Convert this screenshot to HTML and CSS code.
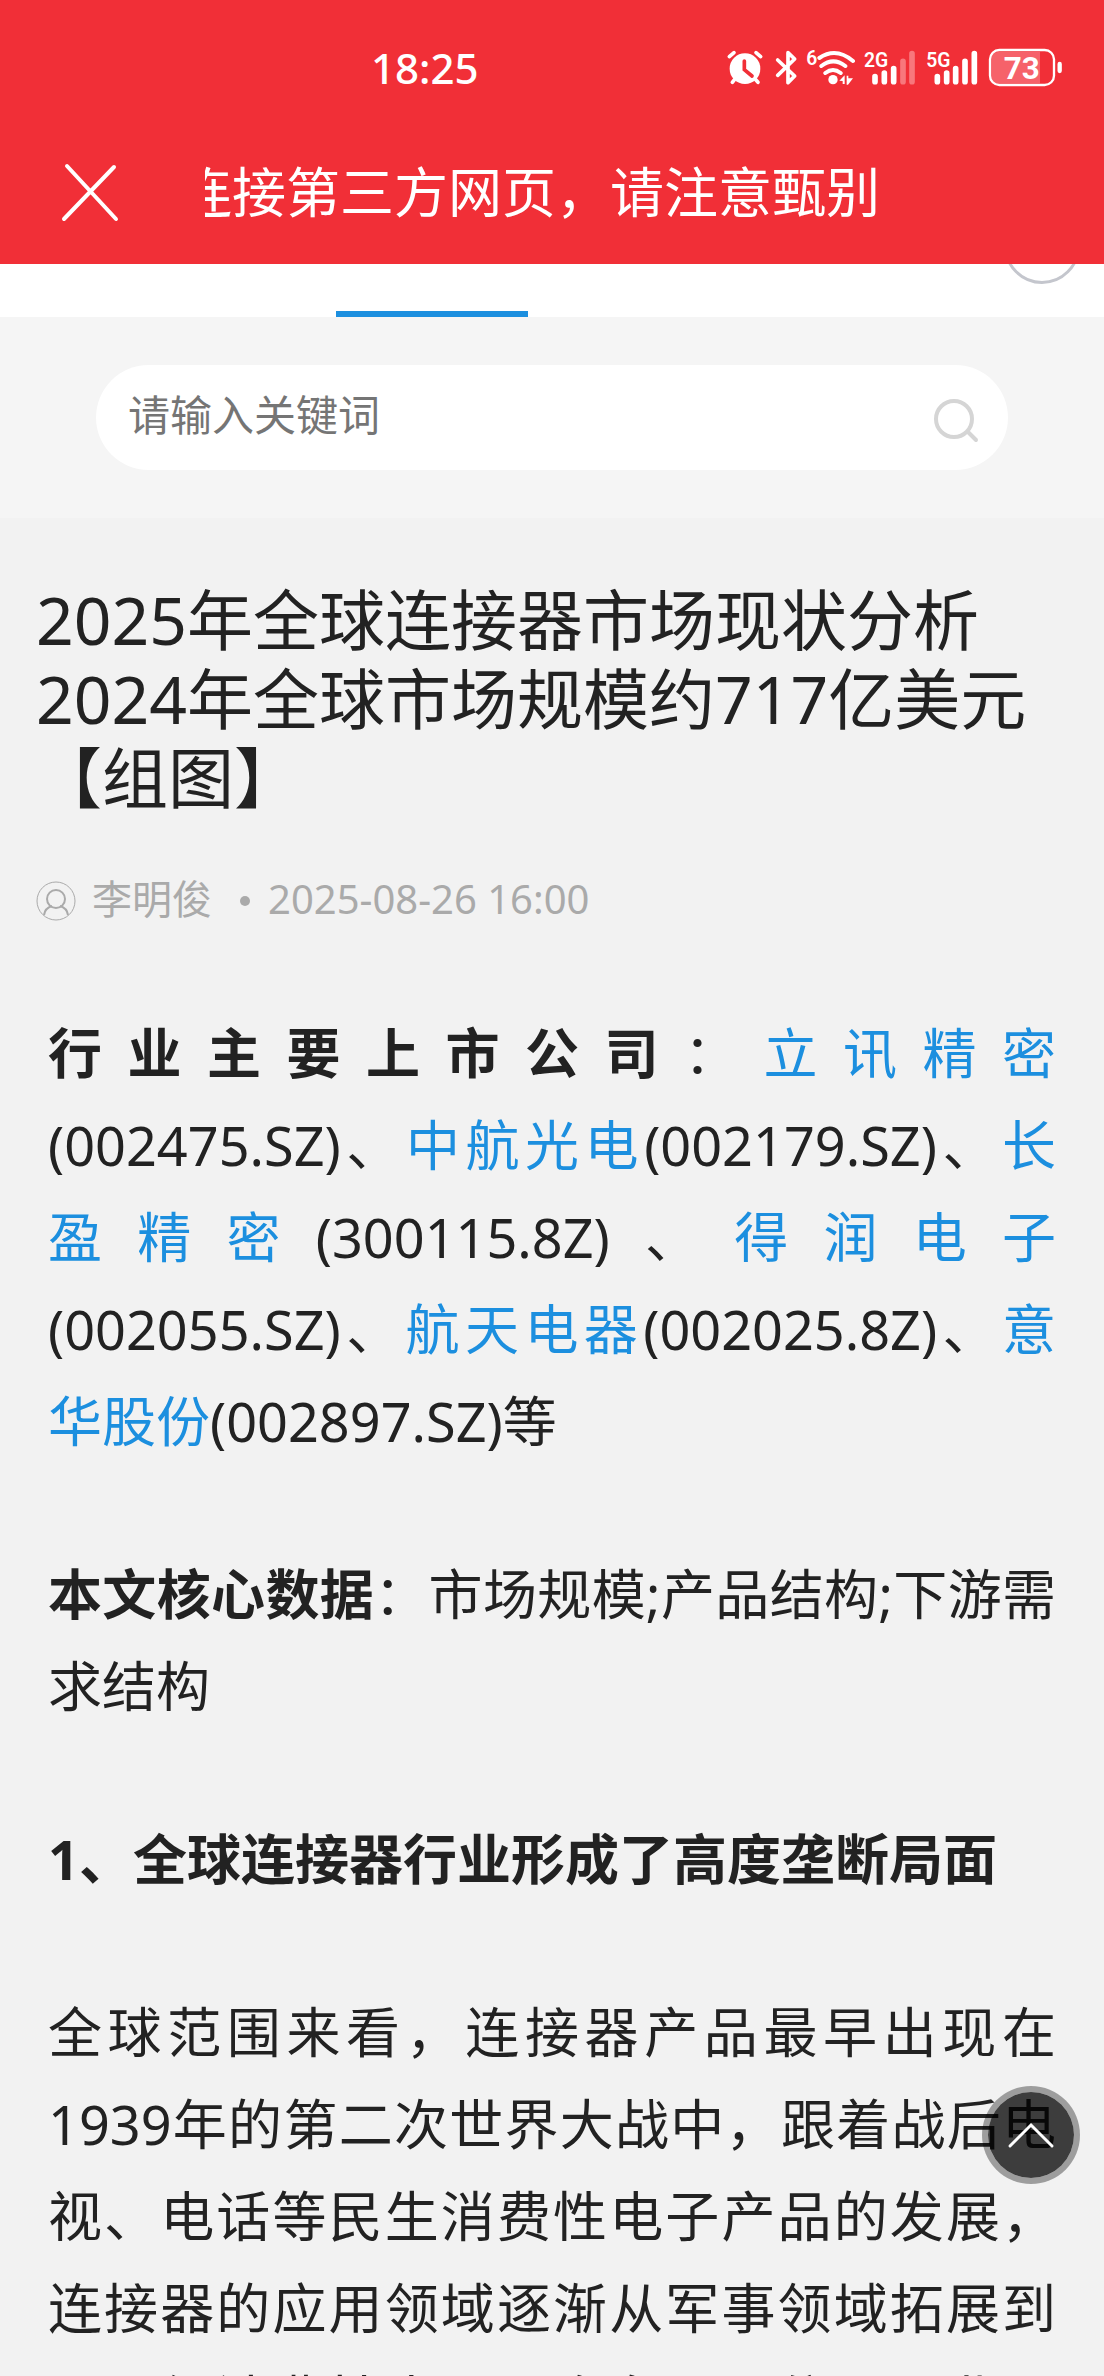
FILE: index.html
```html
<!DOCTYPE html>
<html lang="zh-CN">
<head>
    <meta charset="UTF-8">
    <meta name="viewport" content="width=device-width, initial-scale=1.0">
    <title>2025年全球连接器市场现状分析</title>
    <link rel="stylesheet" href="styles.css">
</head>
<body>
    <header class="app-header">
        <div class="status-bar">
            <span class="time">18:25</span>
            <svg class="status-icons" viewBox="72 48 1014 126" fill="none" stroke="#fff" stroke-linecap="round">
                <!-- Alarm -->
                <circle cx="129" cy="116" r="46" fill="#fff" stroke="none"/>
                <path d="M82 80l14-12M176 80l-14-12M98 148l-7 9M160 148l8 9" stroke-width="11"/>
                <path d="M127 93v26l23 19" stroke="#f12f37" stroke-width="11"/>
                <!-- Bluetooth -->
                <path d="M227 90l51 48-20 20v-90l20 19-51 49" stroke-width="11" stroke-linejoin="round"/>
                <!-- Wifi -->
                <text x="313" y="106" class="net-label">6</text>
                <path d="M352 84q50-34 101 9M358 108q36-28 72 0M370 129q23-18 46 0" stroke-width="12"/>
                <circle cx="393" cy="149" r="14" fill="#fff" stroke="none"/>
                <path d="M412 152l16-16v26h-6v-9zM434 137h5v8h14l-15 19h-4z" fill="#fff" stroke="none"/>
                <!-- Signal -->
                <text x="486" y="110" class="net-label">2G</text>
                <path d="M519 140v15M547 129v26M575 116v39" stroke-width="17"/>
                <path d="M603 94v61M630 71v84" stroke-width="17" stroke="#f8777c"/>
                <text x="673" y="110" class="net-label">5G</text>
                <path d="M706 140v15M734 129v26M761 116v39M789 94v61M817 71v84" stroke-width="17"/>
                <!-- Battery -->
                <path d="M888 66h126v94h-126q-20 0-20-22v-50q0-22 20-22z" fill="#f6626a" stroke="none"/>
                <rect x="864" y="60" width="192" height="105" rx="28" stroke-width="7"/>
                <path d="M1073 102v21" stroke-width="13"/>
                <text x="905" y="147" class="battery-label">73</text>
            </svg>
        </div>
        <div class="title-bar">
            <button class="close-button" aria-label="关闭">
                <svg viewBox="0 0 60 60" fill="none" stroke="#fff" stroke-width="4" stroke-linecap="round">
                    <path d="M7 4l49 53M54 5L4 57"/>
                </svg>
            </button>
            <div class="notice"><span>连接第三方网页，请注意甄别</span></div>
        </div>
    </header>

    <nav class="tabs">
        <div class="active-tab"></div>
        <div class="menu-circle"></div>
    </nav>

    <div class="search">
        <div class="search-box">
            <input type="text" placeholder="请输入关键词" aria-label="请输入关键词">
            <button class="search-button" aria-label="搜索">
                <svg viewBox="0 0 48 48" fill="none" stroke="#d5d5d5" stroke-width="4" stroke-linecap="round">
                    <circle cx="22" cy="22" r="18"/>
                    <path d="M36 35l8 8"/>
                </svg>
            </button>
        </div>
    </div>

    <main class="page">
        <h1>2025年全球连接器市场现状分析 2024年全球市场规模约717亿美元【组图】</h1>
        <div class="meta">
            <svg class="avatar" viewBox="0 0 40 40" fill="none" stroke="#aaa">
                <circle cx="20" cy="20" r="19"/>
                <circle cx="20" cy="18" r="9" stroke-width="2"/>
                <path d="M8 34q1-7 8-9M32 34q-1-7-8-9" stroke-width="2"/>
            </svg>
            <span>李明俊</span>
            <i class="dot"></i>
            <time datetime="2025-08-26T16:00">2025-08-26 16:00</time>
        </div>

        <article class="content">
            <p><strong>行业主要上市公司</strong>：<a href="#">立讯精密</a>(002475.SZ)、<a href="#">中航光电</a>(002179.SZ)、<a href="#">长盈精密</a>(300115.8Z)、<a href="#">得润电子</a>(002055.SZ)、<a href="#">航天电器</a>(002025.8Z)、<a href="#">意华股份</a>(002897.SZ)等</p>
            <p><strong>本文核心数据</strong>：市场规模;产品结构;下游需求结构</p>
            <h2>1、全球连接器行业形成了高度垄断局面</h2>
            <p>全球范围来看，连接器产品最早出现在1939年的第二次世界大战中，跟着战后电视、电话等民生消费性电子产品的发展，连接器的应用领域逐渐从军事领域拓展到民用级消费性电子、汽车、通信、工业、医疗等多个领域。</p>
        </article>
    </main>

    <button class="back-to-top" aria-label="返回顶部">
        <svg viewBox="0 0 48 28" fill="none" stroke="#fff" stroke-width="3" stroke-linecap="round">
            <path d="M3 25L24 4l21 21"/>
        </svg>
    </button>
</body>
</html>
```
FILE: styles.css
```css
:root {
    --red: #f12f37;
    --blue: #1c8fdf;
    --fg: #222;
    --muted: #aaa;
    --bg: #f2f2f2;
}

* {
    margin: 0;
    padding: 0;
    box-sizing: border-box;
}

body {
    display: flex;
    flex-direction: column;
    height: 100vh;
    overflow: hidden;
    background-color: var(--bg);
    color: var(--fg);
    font-family: "Noto Sans", "Noto Sans CJK SC", sans-serif;
    text-spacing-trim: space-all;
}

button {
    border: none;
    background: none;
    cursor: pointer;
}

svg {
    display: block;
}

.app-header {
    flex: none;
    background-color: var(--red);
    color: #fff;
}

.status-bar {
    display: flex;
    align-items: center;
    justify-content: space-between;
    height: 136px;
    padding: 0 40px 2px 371px;
}

.time {
    font-size: 42px;
    font-weight: 500;
}

.status-icons {
    width: 338px;
    height: 42px;
}

.net-label {
    font: 600 58px Roboto, sans-serif;
    fill: #fff;
    stroke: none;
}

.battery-label {
    font: 700 94px Roboto, sans-serif;
    fill: #fff;
    stroke: none;
}

.title-bar {
    display: flex;
    align-items: center;
    height: 128px;
    padding: 0 224px 16px 60px;
}

.close-button {
    width: 60px;
    height: 60px;
    margin-right: 85px;
}

.notice {
    display: flex;
    flex: 1;
    justify-content: flex-end;
    overflow: hidden;
    font-size: 54px;
    line-height: 72px;
    white-space: nowrap;
}

.tabs {
    position: relative;
    flex: none;
    height: 53px;
    overflow: hidden;
    background-color: #fff;
}

.active-tab {
    position: absolute;
    left: 336px;
    bottom: 0;
    width: 192px;
    height: 6px;
    background-color: var(--blue);
}

.menu-circle {
    position: absolute;
    right: 24px;
    bottom: 33px;
    width: 76px;
    height: 76px;
    border: 3px solid #c4c6cd;
    border-radius: 50%;
}

.search {
    flex: none;
    padding: 48px 96px;
    background-color: #f5f5f5;
}

.search-box {
    display: flex;
    align-items: center;
    height: 105px;
    padding: 0 28px 0 32px;
    border-radius: 53px;
    background-color: #fff;
}

.search-box input {
    flex: 1;
    min-width: 0;
    padding-bottom: 6px;
    border: none;
    outline: none;
    background: none;
    color: var(--fg);
    font-family: inherit;
    font-size: 42px;
}

.search-box input::placeholder {
    color: #757575;
}

.search-button {
    width: 48px;
    height: 48px;
    margin-top: 6px;
}

.page {
    flex: 1;
    min-height: 0;
    padding: 62px 36px 0;
    overflow: hidden;
}

h1 {
    font-size: 66px;
    font-weight: 400;
    line-height: 79px;
}

.meta {
    display: flex;
    align-items: center;
    height: 60px;
    margin-top: 54px;
    color: var(--muted);
    font-size: 40px;
    line-height: 56px;
}

.meta span,
.meta time {
    padding-bottom: 4px;
}

.avatar {
    width: 40px;
    height: 40px;
    margin-right: 16px;
}

.dot {
    width: 10px;
    height: 10px;
    margin: 0 18px 0 28px;
    border-radius: 50%;
    background-color: var(--muted);
}

.content {
    padding: 76px 12px 0;
    font-size: 54px;
    line-height: 92px;
    text-align: justify;
}

.content p,
.content h2 {
    margin-bottom: 81px;
}

.content h2 {
    font-size: 54px;
    font-weight: 700;
}

.content a {
    color: var(--blue);
    text-decoration: none;
}

.back-to-top {
    position: fixed;
    right: 24px;
    bottom: 192px;
    display: flex;
    align-items: center;
    justify-content: center;
    width: 98px;
    height: 98px;
    border: 6px solid rgba(0, 0, 0, 0.35);
    border-radius: 50%;
    background: rgba(0, 0, 0, 0.75) padding-box;
}

.back-to-top svg {
    width: 48px;
    height: 28px;
}
```
